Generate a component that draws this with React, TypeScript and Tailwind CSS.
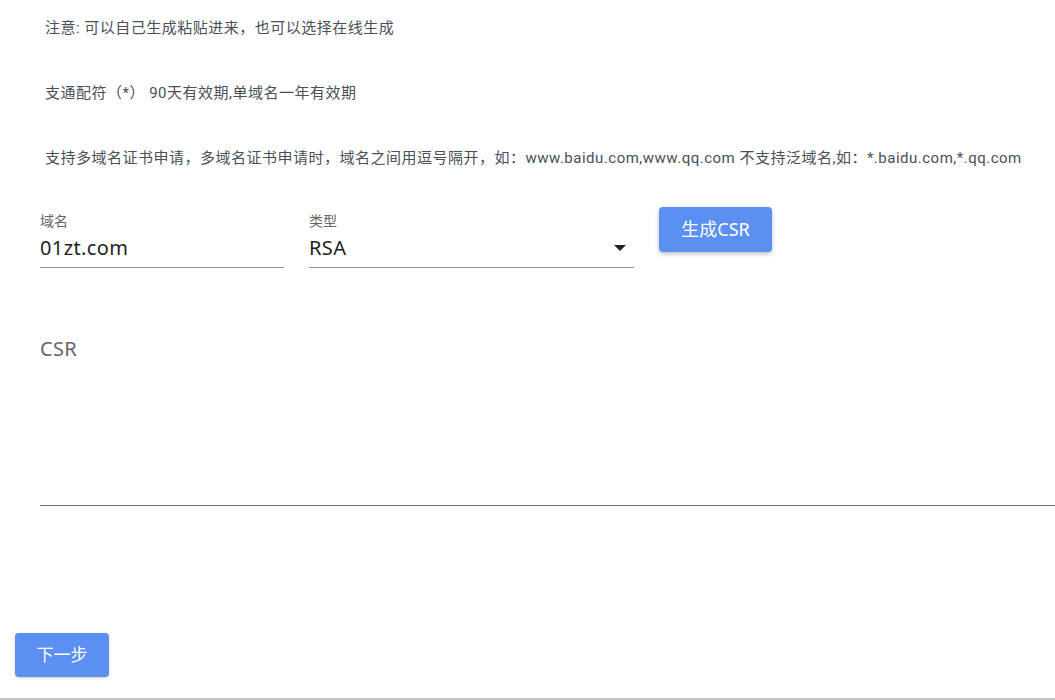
import React from "react";

const noteFont = { fontFamily: 'Roboto, "Noto Sans CJK SC", sans-serif' };
const fieldFont = { fontFamily: '"Noto Sans", "Noto Sans CJK SC", sans-serif' };

export default function App() {
  return (
    <div
      className="relative w-[1055px] h-[700px] bg-white overflow-hidden border-b-2 border-[#c4c4c4] flex flex-col"
      style={noteFont}
    >
      <div className="pl-[45px] pt-[17px] flex flex-col gap-[43px] text-[15px] leading-[22px] tracking-[0.5px] text-[#4a4f58]">
        <p>注意: 可以自己生成粘贴进来，也可以选择在线生成</p>
        <p>支通配符（*） 90天有效期,单域名一年有效期</p>
        <p className="whitespace-nowrap">
          支持多域名证书申请，多域名证书申请时，域名之间用逗号隔开，如：www.baidu.com,www.qq.com 不支持泛域名,如：*.baidu.com,*.qq.com
        </p>
      </div>

      <div className="flex items-start pl-[40px] mt-[38px] gap-[25px]" style={fieldFont}>
        <div className="w-[244px] pt-[6px] border-b border-[#949494] pb-[6px]">
          <div className="text-[14px] leading-[16px] text-[#666]">域名</div>
          <div className="text-[20px] leading-[26px] tracking-[0.4px] mt-[6px] text-[#1f1f1f]">01zt.com</div>
        </div>
        <div className="w-[325px] pt-[6px] border-b border-[#949494] pb-[6px] relative">
          <div className="text-[14px] leading-[16px] text-[#666]">类型</div>
          <div className="flex items-center justify-between mt-[6px]">
            <div className="text-[20px] leading-[26px] tracking-[0.4px] text-[#1f1f1f]">RSA</div>
            <svg width="14" height="8" viewBox="0 0 14 8" className="mr-[7px]">
              <path d="M1 1 L13 1 L7 7 Z" fill="#222" />
            </svg>
          </div>
        </div>
        <button className="w-[113px] h-[45px] rounded-[4px] bg-[#5b8ff1] text-white text-[18px] shadow-[0_2px_4px_rgba(0,0,0,0.25)]">
          生成CSR
        </button>
      </div>

      <div className="pl-[40px] mt-[68px]" style={fieldFont}>
        <div className="text-[20px] leading-[26px] tracking-[0.3px] text-[#666]">CSR</div>
        <div className="w-[1030px] h-[144px] border-b border-[#757575]"></div>
      </div>

      <div className="pl-[15px] mt-[127px]" style={fieldFont}>
        <button className="w-[94px] h-[44px] rounded-[4px] bg-[#5b8ff1] text-white text-[17px] shadow-[0_1px_3px_rgba(0,0,0,0.2)]">
          下一步
        </button>
      </div>
    </div>
  );
}
